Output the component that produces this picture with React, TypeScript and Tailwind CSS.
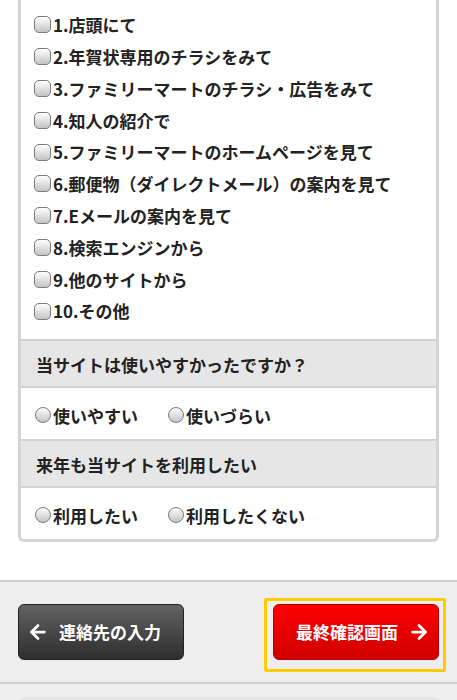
import React from "react";
import { ArrowLeft, ArrowRight } from "lucide-react";

const items = [
  "1.店頭にて",
  "2.年賀状専用のチラシをみて",
  "3.ファミリーマートのチラシ・広告をみて",
  "4.知人の紹介で",
  "5.ファミリーマートのホームページを見て",
  "6.郵便物（ダイレクトメール）の案内を見て",
  "7.Eメールの案内を見て",
  "8.検索エンジンから",
  "9.他のサイトから",
  "10.その他",
];

function Check() {
  return (
    <span className="inline-block w-[17px] h-[17px] mr-[2px] shrink-0 rounded-[5px] border border-[#7a7a7a] bg-gradient-to-b from-[#ffffff] to-[#c4c4c4]" />
  );
}

function Radio() {
  return (
    <span className="inline-block w-[16px] h-[16px] mr-[2px] shrink-0 rounded-full border border-[#7a7a7a] bg-gradient-to-b from-[#ffffff] to-[#c4c4c4]" />
  );
}

function Header({ children }: { children: React.ReactNode }) {
  return (
    <div className="h-[49px] flex items-center pl-[15px] pt-[2px] bg-[#e6e6e6] border-y-2 border-[#d2d2d2] text-[17px] font-bold text-[#222]">
      {children}
    </div>
  );
}

function RadioRow({ a, b }: { a: string; b: string }) {
  return (
    <div className="h-[51px] flex items-center pl-[14px] pt-[4px] text-[17px] font-bold text-[#222]">
      <div className="flex items-center w-[133px]">
        <Radio />
        <span>{a}</span>
      </div>
      <div className="flex items-center">
        <Radio />
        <span>{b}</span>
      </div>
    </div>
  );
}

export default function App() {
  return (
    <div
      className="w-[457px] h-[700px] overflow-hidden bg-white"
      style={{ fontFamily: '"Noto Sans CJK JP", "Noto Sans", sans-serif' }}
    >
      <div className="px-[18px]">
        <div className="border-x-[3px] border-b-[3px] border-[#d4d4d4] rounded-b-[6px] bg-white">
          <div className="pt-[9px] pb-[12px]">
            {items.map((t) => (
              <div
                key={t}
                className="h-[31.8px] flex items-center pl-[13px] text-[17px] font-bold text-[#222]"
              >
                <Check />
                <span>{t}</span>
              </div>
            ))}
          </div>
          <Header>当サイトは使いやすかったですか？</Header>
          <RadioRow a="使いやすい" b="使いづらい" />
          <Header>来年も当サイトを利用したい</Header>
          <RadioRow a="利用したい" b="利用したくない" />
        </div>
      </div>

      <div className="mt-[38px] border-y-2 border-[#d0d0d0] bg-[#eeeeee] h-[104px] flex items-center justify-between px-[18px]">
        <button className="w-[166px] h-[56px] rounded-[6px] border border-[#222] bg-gradient-to-b from-[#636363] to-[#2e2e2e] flex items-center pl-[8px] text-white text-[17px] font-bold">
          <ArrowLeft size={22} strokeWidth={3} className="mr-[10px]" />
          <span>連絡先の入力</span>
        </button>
        <div className="relative">
          <span className="absolute -top-[6px] -left-[9px] -right-[7px] -bottom-[12px] border-[3px] border-[#ffcc00] rounded-[3px]" />
          <button className="relative w-[166px] h-[56px] rounded-[6px] border border-[#b00000] bg-gradient-to-b from-[#ff0000] to-[#d00000] flex items-center justify-end pr-[8px] text-white text-[17px] font-bold">
            <span>最終確認画面</span>
            <ArrowRight size={22} strokeWidth={3} className="ml-[10px]" />
          </button>
        </div>
      </div>
      <div className="bg-[#efefef] h-[40px] pt-[13px] px-[18px]">
        <div className="h-[10px] rounded-t-[6px] bg-gradient-to-b from-[#e4e4e4] to-[#efefef]" />
      </div>
    </div>
  );
}
